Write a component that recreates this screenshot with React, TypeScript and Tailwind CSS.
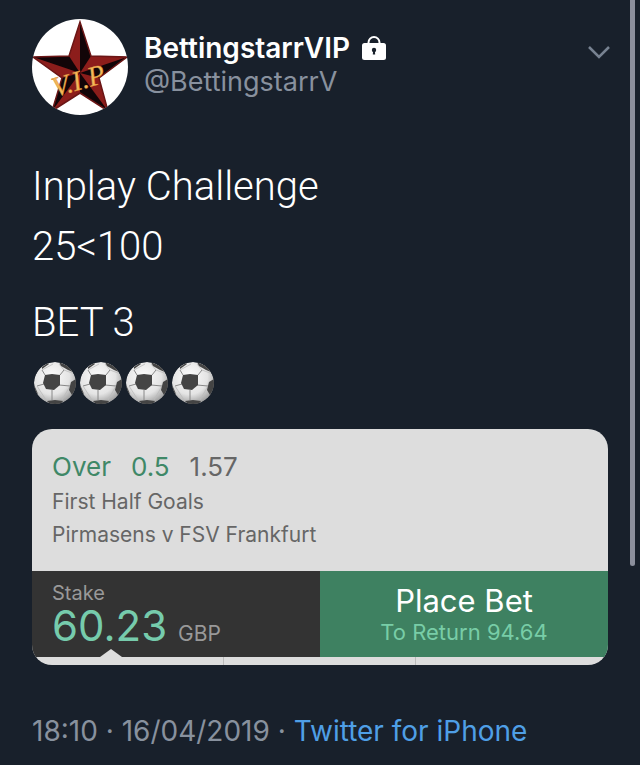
import React from 'react';

const StarAvatar: React.FC = () => (
  <svg viewBox="0 0 96 96" className="size-24 shrink-0 rounded-full bg-white" role="img" aria-label="V.I.P star">
    <path d="M48 3 59 37 95 38 67 59 76 92 48 74 20 92 30 59 1 38 37 37Z" fill="#120508" />
    {/* lit facets */}
    <g fill="#8c1d1b">
      <path d="M48 3 48 54 37 37Z" />
      <path d="M95 38 48 54 59 37Z" />
      <path d="M76 92 48 54 67 59Z" />
      <path d="M20 92 48 54 48 74Z" />
      <path d="M1 38 48 54 30 59Z" />
    </g>
    <path d="M48 3 59 37 95 38 67 59 76 92 48 74 20 92 30 59 1 38 37 37Z" fill="none" stroke="#6b1616" strokeWidth="1.5" />
    <text
      transform="translate(23 78) rotate(-16)"
      className="font-['Liberation_Serif',serif] text-[28px] italic"
      fill="#f3b95a"
      stroke="#d98a35"
      strokeWidth="0.4"
    >
      V.I.P
    </text>
  </svg>
);

const LockIcon: React.FC = () => (
  <svg viewBox="0 0 24 24" className="size-6" role="img" aria-label="Protected account">
    <path d="M6.5 8V6.5a5.5 5.5 0 0 1 11 0V8" fill="none" stroke="#fff" strokeWidth="2" />
    <rect x="0" y="7" width="24" height="17" rx="2.5" fill="#fff" />
    <circle cx="12" cy="14" r="2.2" fill="#18202b" />
    <path d="M11.2 14h1.6l.4 4.5h-2.4z" fill="#18202b" />
  </svg>
);

const Football: React.FC = () => (
  <svg viewBox="0 0 44 44" className="size-11" role="img" aria-label="Football">
    <defs>
      <radialGradient id="ball" cx="0.42" cy="0.35" r="0.65">
        <stop offset="0" stopColor="#fcfcfc" />
        <stop offset="0.65" stopColor="#e4e4e4" />
        <stop offset="1" stopColor="#a3a3a3" />
      </radialGradient>
      <clipPath id="ball-edge">
        <circle cx="22" cy="22" r="21" />
      </clipPath>
    </defs>
    <g clipPath="url(#ball-edge)">
      <circle cx="22" cy="22" r="21" fill="url(#ball)" />
      {/* seams */}
      <path d="M12 14 9 9M27 14l4-5M11 23 4 25M26 24l11 1M19 29v10" fill="none" stroke="#888" strokeWidth="1" />
      <path d="M9 9 20 3M31 9 26 3M31 9l8 3M4 25l9 14M37 25l-8 14" fill="none" stroke="#bbb" strokeWidth="0.8" />
      <g fill="#444">
        <path d="m12 14 7-1 8 1v10l-6 5-8-1-3-6z" />
        <path d="M26 1 35 5 40 11 35 9 28 5Z" />
        <path d="m43 18-5 3-2 8 3 5 4-7z" />
        <path d="m14 40 8-1 8 1-3 4h-9z" />
        <path d="M0 23 2 26 5 33 1 31Z" />
        <path d="M9 6 15 2 16 3 9 8Z" />
      </g>
    </g>
  </svg>
);

const BetSlip: React.FC = () => (
  <section className="overflow-hidden rounded-[20px] bg-[#dddddd]">
    <div className="px-5 pt-5 pb-5 text-[#666666]">
      <p className="flex gap-5 text-[26px] leading-9">
        <span className="text-[#3f8867]">Over</span>
        <span className="text-[#3f8867]">0.5</span>
        <span>1.57</span>
      </p>
      <p className="text-[21px] leading-[34px]">First Half Goals</p>
      <p className="text-[21px] leading-8">Pirmasens v FSV Frankfurt</p>
    </div>
    <div className="grid h-[86px] grid-cols-2">
      <div className="relative bg-[#333333] px-5 pt-[10px] text-[#999999]">
        <label htmlFor="stake" className="block text-xl leading-6">Stake</label>
        <div className="flex items-baseline gap-2">
          <input
            id="stake"
            defaultValue="60.23"
            className="h-10 w-[118px] bg-transparent text-[42px] leading-10 text-[#76cbac] outline-none"
          />
          <span className="text-[21px] leading-6">GBP</span>
        </div>
        <svg viewBox="0 0 22 8" className="absolute bottom-0 left-[68px] h-2 w-[22px]" aria-hidden="true">
          <path d="M0 8 11 0 22 8Z" fill="#dddddd" />
        </svg>
      </div>
      <button type="button" className="bg-[#3e8161] text-center">
        <span className="block text-[31px] leading-9 text-white">Place Bet</span>
        <span className="block text-[22px] leading-[26px] text-[#78cda7]">To Return 94.64</span>
      </button>
    </div>
    {/* top edge of the keypad */}
    <div className="grid h-2 grid-cols-3 divide-x divide-[#bbbbbb]">
      <span />
      <span />
      <span />
    </div>
  </section>
);

export default function App() {
  return (
    <div className="flex min-h-screen bg-[#18202b] font-['Inter','Liberation_Sans',sans-serif] text-white">
      <article className="min-w-0 flex-1 pt-[19px] pr-[22px] pl-8">
        <header className="flex items-start gap-4">
          <StarAvatar />
          <div className="min-w-0 flex-1 pt-3">
            <div className="flex items-center gap-3">
              <h1 className="text-[28px] leading-[34px] font-semibold">BettingstarrVIP</h1>
              <LockIcon />
            </div>
            <p className="text-[27px] leading-[34px] text-[#88919e]">@BettingstarrV</p>
          </div>
          <button type="button" aria-label="More" className="-mr-1 pt-6 pr-px">
            <svg viewBox="0 0 24 18" className="h-[18px] w-6" fill="none" stroke="#778291" strokeWidth="2.5">
              <path d="m2 4 10 10L22 4" />
            </svg>
          </button>
        </header>

        <div className="pt-[42px] font-['Roboto','Inter',sans-serif] text-[40px] leading-[60px] font-light">
          <p>Inplay Challenge</p>
          <p>25&lt;100</p>
          <p className="pt-4">BET 3</p>
          <div className="flex gap-[2px] pt-2 pl-px">
            <Football />
            <Football />
            <Football />
            <Football />
          </div>
        </div>

        <div className="pt-6">
          <BetSlip />
        </div>

        <footer className="pt-12 text-[28px] leading-9 text-[#88919e]">
          <time dateTime="2019-04-16T18:10">18:10 · 16/04/2019</time> ·{' '}
          <a href="#source" className="text-[#4f9fe6]">Twitter for iPhone</a>
        </footer>
      </article>
      <div className="mr-[5px] h-[566px] w-[5px] rounded-b-full bg-[#8b8f9c]" />
    </div>
  );
}
